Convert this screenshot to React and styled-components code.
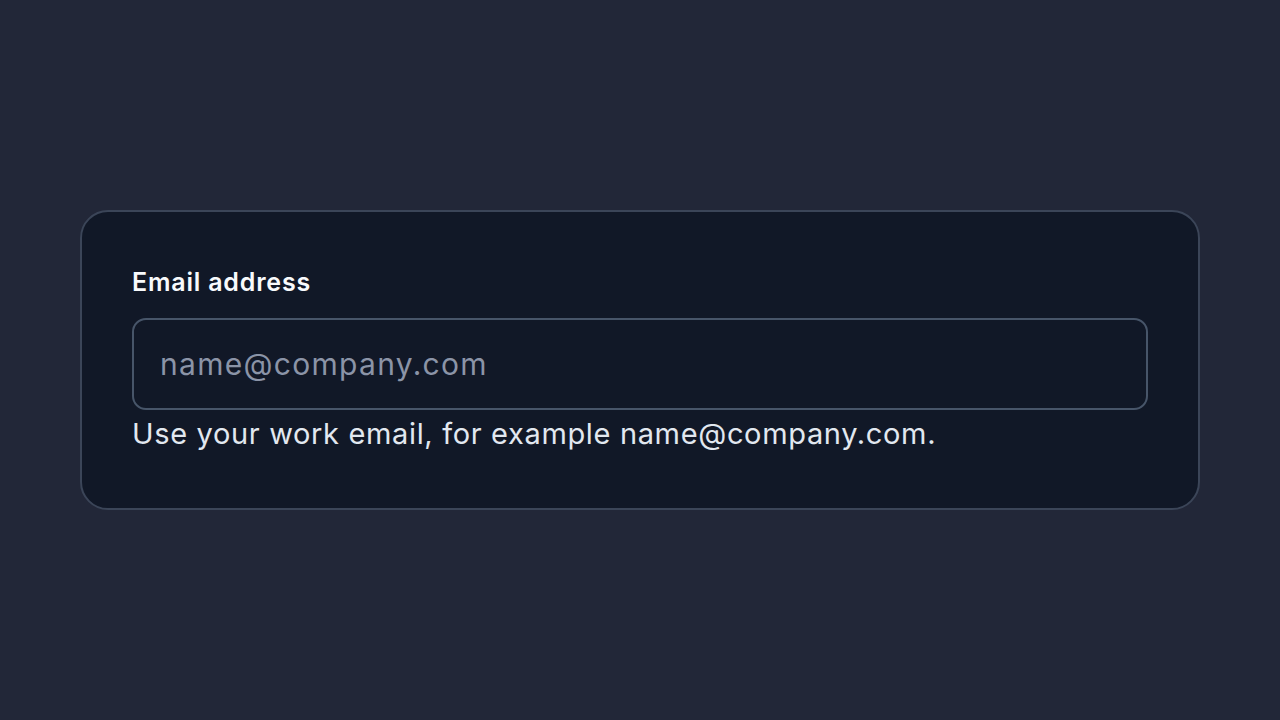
import React from "react";
import styled, { createGlobalStyle } from "styled-components";

const Global = createGlobalStyle`
  html, body { margin: 0; padding: 0; }
  body {
    background: #222738;
    font-family: Inter, "Noto Sans", sans-serif;
  }
  * { box-sizing: border-box; }
`;

const Page = styled.main`
  min-height: 720px;
  display: flex;
  align-items: center;
  justify-content: center;
  padding: 0 80px;
`;

const Card = styled.section`
  width: 100%;
  height: 300px;
  background: #111827;
  border: 2px solid #3b4558;
  border-radius: 28px;
  padding: 0 50px 3px;
  display: flex;
  flex-direction: column;
  justify-content: center;
`;

const Label = styled.label`
  display: block;
  color: #f8fafc;
  font-size: 25px;
  font-weight: 600;
  letter-spacing: 0.8px;
  line-height: 32px;
  margin-bottom: 20px;
`;

const Input = styled.input`
  display: block;
  width: 100%;
  height: 92px;
  background: #111827;
  border: 2px solid #475569;
  border-radius: 14px;
  padding: 0 26px;
  color: #f1f5f9;
  font-family: inherit;
  font-size: 30px;
  letter-spacing: 1.3px;
  outline: none;
  &::placeholder { color: #8b94a7; }
`;

const Help = styled.p`
  margin: 6px 0 0;
  color: #e2e8f0;
  font-size: 29px;
  letter-spacing: 0.65px;
  line-height: 36px;
`;

export default function App() {
  return (
    <>
      <Global />
      <Page>
        <Card>
          <Label htmlFor="email">Email address</Label>
          <Input id="email" type="email" placeholder="name@company.com" />
          <Help>Use your work email, for example name@company.com.</Help>
        </Card>
      </Page>
    </>
  );
}
